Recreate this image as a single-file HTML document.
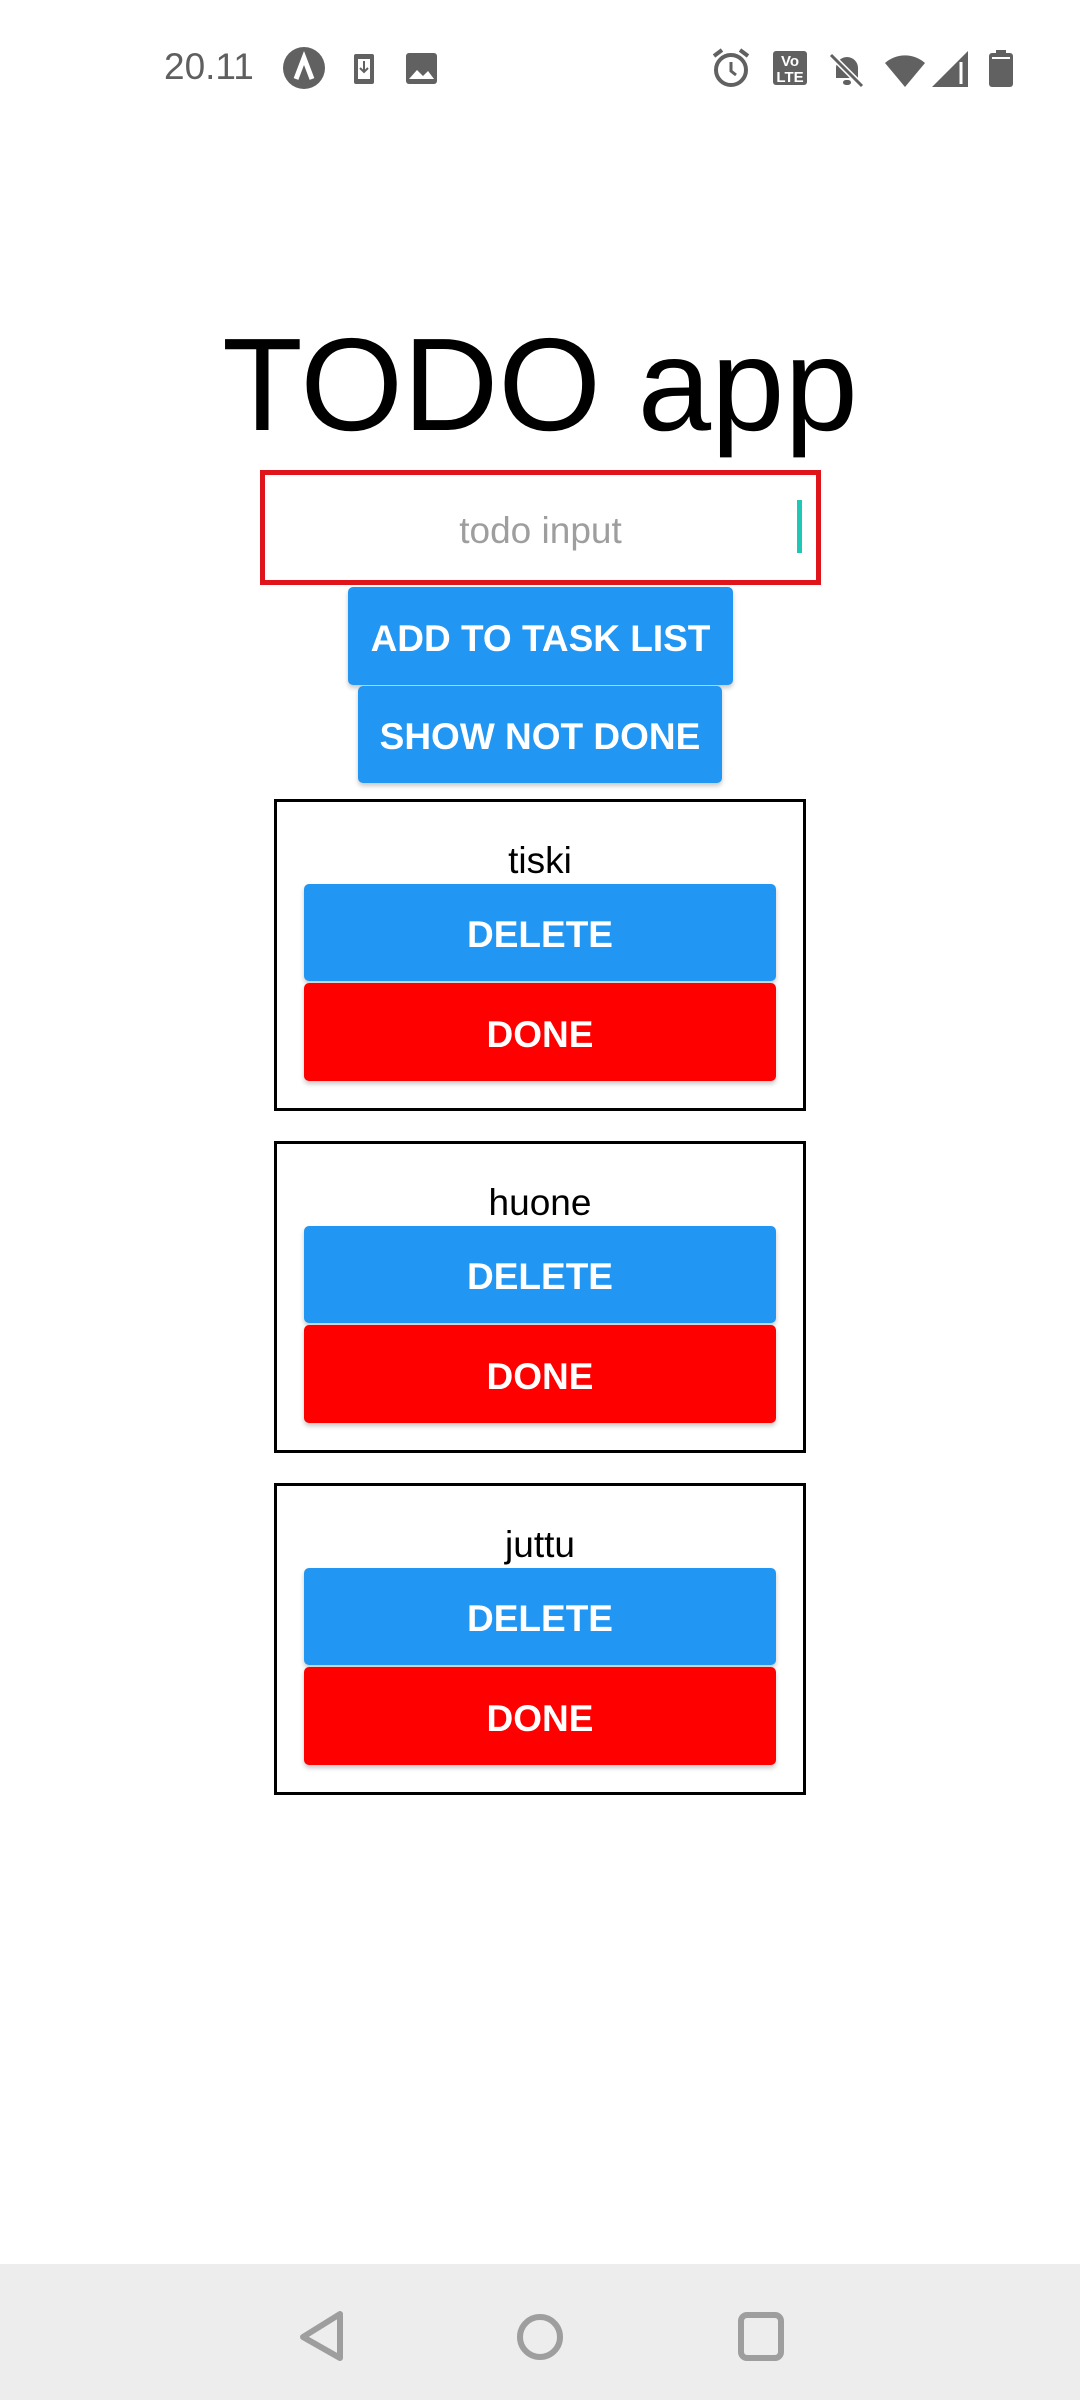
<!DOCTYPE html>
<html><head><meta charset="utf-8"><style>
*{margin:0;padding:0;box-sizing:border-box}
body{width:1080px;height:2400px;background:#fff;position:relative;overflow:hidden;font-family:"Liberation Sans",sans-serif}
.a{position:absolute}
.btn{position:absolute;color:#fff;font-weight:bold;font-size:37px;display:flex;align-items:center;justify-content:center;border-radius:5px;box-shadow:0 3px 5px rgba(0,0,0,0.22);padding-top:5px}
.blue{background:#2196F3}.red{background:#FF0000}
.card{position:absolute;left:274px;width:532px;height:312px;border:3px solid #000}
.lbl{position:absolute;left:0;right:0;text-align:center;font-size:37px;color:#000}
</style></head><body>
<div class="a" style="left:164px;top:46px;font-size:37px;color:#5f5f5f">20.11</div>
<svg class="a" style="left:0;top:0" width="1080" height="110">
<g fill="#616161">
<circle cx="304" cy="68" r="21"/>
<path d="M296 79 L304 58 L312 79" stroke="#fff" stroke-width="5" fill="none"/>
<rect x="354" y="54" width="20" height="30" rx="2"/>
<rect x="358" y="59" width="12" height="20" fill="#fff"/>
<path d="M364 61 v10 M360 68 l4 4 l4 -4" stroke="#616161" stroke-width="2" fill="none"/>
<rect x="406" y="53" width="31" height="31" rx="3"/>
<path d="M409 79 l8 -9 l6 6 l5 -5 l6 8z" fill="#fff"/>
<circle cx="731" cy="70" r="15" fill="none" stroke="#616161" stroke-width="4"/>
<path d="M731 62 v9 l5 4" stroke="#616161" stroke-width="3" fill="none"/>
<path d="M714 56 l8 -6 M748 56 l-8 -6" stroke="#616161" stroke-width="4"/>
<rect x="773" y="51" width="34" height="34" rx="3"/>
<text x="790" y="66" font-size="15" font-weight="bold" fill="#fff" text-anchor="middle" font-family="Liberation Sans">Vo</text>
<text x="790" y="82" font-size="15" font-weight="bold" fill="#fff" text-anchor="middle" font-family="Liberation Sans">LTE</text>
<path d="M836 78 v-10 a11 11 0 0 1 22 0 v10 z"/><rect x="843" y="80" width="8" height="5" rx="3"/>
<path d="M831 55 l31 31" stroke="#fff" stroke-width="6"/><path d="M831 55 l31 31" stroke="#616161" stroke-width="3"/>
<path d="M885 63 a30 30 0 0 1 40 0 l-20 24z"/>
<path d="M932 87 l36 -36 v36z"/><path d="M961 62 v22" stroke="#fff" stroke-width="3"/>
<rect x="989" y="53" width="24" height="34" rx="3"/><rect x="996" y="50" width="10" height="4"/>
<rect x="992" y="57" width="18" height="2" fill="#fff"/>
</g></svg>
<div class="a" style="left:0;width:1080px;top:310px;text-align:center;font-size:132px;line-height:150px;color:#000">TODO app</div>
<div class="a" style="left:260px;top:470px;width:561px;height:115px;border:5px solid #e0141b"></div>
<div class="a" style="left:260px;width:561px;top:510px;text-align:center;font-size:37px;color:#9e9e9e">todo input</div>
<div class="a" style="left:797px;top:500px;width:5px;height:53px;background:#1ec8b4"></div>
<div class="btn blue" style="left:348px;top:587px;width:385px;height:98px">ADD TO TASK LIST</div>
<div class="btn blue" style="left:358px;top:686px;width:364px;height:97px">SHOW NOT DONE</div>

<div class="card" style="top:799px"><div class="lbl" style="top:38px">tiski</div></div>
<div class="btn blue" style="left:304px;top:884px;width:472px;height:97px">DELETE</div>
<div class="btn red" style="left:304px;top:983px;width:472px;height:98px">DONE</div>

<div class="card" style="top:1141px"><div class="lbl" style="top:38px">huone</div></div>
<div class="btn blue" style="left:304px;top:1226px;width:472px;height:97px">DELETE</div>
<div class="btn red" style="left:304px;top:1325px;width:472px;height:98px">DONE</div>

<div class="card" style="top:1483px"><div class="lbl" style="top:38px">juttu</div></div>
<div class="btn blue" style="left:304px;top:1568px;width:472px;height:97px">DELETE</div>
<div class="btn red" style="left:304px;top:1667px;width:472px;height:98px">DONE</div>

<div class="a" style="left:0;top:2264px;width:1080px;height:136px;background:#ededed"></div>
<svg class="a" style="left:0;top:2264px" width="1080" height="136">
<g fill="none" stroke="#9e9e9e" stroke-width="6" stroke-linejoin="round">
<path d="M340 50 L340 94 L303 73 Z"/>
<circle cx="540" cy="73" r="20"/>
<rect x="741" y="51" width="40" height="43" rx="6"/>
</g></svg>
</body></html>
